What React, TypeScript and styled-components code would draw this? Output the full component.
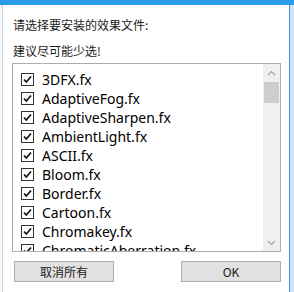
import React from "react";
import styled, { createGlobalStyle } from "styled-components";

const Global = createGlobalStyle`
  html, body { margin: 0; padding: 0; }
  body {
    width: 294px; height: 292px; overflow: hidden;
    background: #f4f7fa;
    font-family: "Noto Sans", "Noto Sans CJK SC", sans-serif;
  }
`;

const Page = styled.div`
  display: flex;
  flex-direction: column;
  width: 294px;
  height: 292px;
`;

const TitleStrip = styled.div`
  height: 5px;
  background: #2a9be8;
  flex: none;
`;

const Frame = styled.div`
  display: flex;
  flex: 1;
`;

const Gutter = styled.div<{ $w: number; $bg: string }>`
  width: ${(p) => p.$w}px;
  flex: none;
  background: ${(p) => p.$bg};
`;

const Window = styled.div`
  flex: 1;
  display: flex;
  flex-direction: column;
  background: #fff;
  border-left: 1px solid #c9d6e3;
  border-right: 1px solid #3d95de;
`;

const Body = styled.div`
  display: flex;
  flex-direction: column;
  padding: 12px 8px 0 9px;
`;

const Label = styled.div<{ $mt: number }>`
  font-family: "Noto Sans CJK SC", sans-serif;
  font-size: 12px;
  line-height: 16px;
  color: #1a1a1a;
  margin-top: ${(p) => p.$mt}px;
  padding-left: 1px;
`;

const ListBox = styled.div`
  margin-top: 4px;
  height: 187px;
  border: 1px solid #adadad;
  display: flex;
  overflow: hidden;
`;

const Items = styled.div`
  flex: 1;
  padding: 6px 0 0 8px;
  overflow: hidden;
`;

const Row = styled.div`
  height: 19px;
  display: flex;
  align-items: center;
  gap: 8px;
  font-family: "Noto Sans", sans-serif;
  font-size: 14px;
  color: #000;
  white-space: nowrap;
`;

const Box = styled.span`
  width: 11px;
  height: 11px;
  border: 1px solid #333;
  background: #fff;
  flex: none;
  display: flex;
  align-items: center;
  justify-content: center;
`;

const ScrollBar = styled.div`
  width: 17px;
  flex: none;
  background: #f0f0f0;
  display: flex;
  flex-direction: column;
`;

const Arrow = styled.div`
  height: 17px;
  display: flex;
  align-items: center;
  justify-content: center;
  flex: none;
`;

const Thumb = styled.div`
  height: 21px;
  margin: 1px 1px 0;
  background: #cdcdcd;
  flex: none;
`;

const Track = styled.div`
  flex: 1;
`;

const Buttons = styled.div`
  display: flex;
  justify-content: space-between;
  margin-top: 9px;
  padding-left: 2px;
`;

const Button = styled.button`
  width: 100px;
  height: 21px;
  background: #e1e1e1;
  border: 1px solid #adadad;
  padding: 0;
  font-family: "Noto Sans CJK SC", "Noto Sans", sans-serif;
  font-size: 12px;
  color: #1a1a1a;
  display: flex;
  align-items: center;
  justify-content: center;
`;

const Check = () => (
  <svg width="9" height="9" viewBox="0 0 9 9">
    <polyline points="1,4.5 3.3,7 8,1.5" fill="none" stroke="#111" strokeWidth="1.7" />
  </svg>
);

const Chevron = ({ up }: { up: boolean }) => (
  <svg width="9" height="6" viewBox="0 0 9 6">
    <polyline
      points={up ? "1,5 4.5,1.5 8,5" : "1,1 4.5,4.5 8,1"}
      fill="none"
      stroke="#a3a3a3"
      strokeWidth="1.2"
    />
  </svg>
);

const files = [
  "3DFX.fx",
  "AdaptiveFog.fx",
  "AdaptiveSharpen.fx",
  "AmbientLight.fx",
  "ASCII.fx",
  "Bloom.fx",
  "Border.fx",
  "Cartoon.fx",
  "Chromakey.fx",
  "ChromaticAberration.fx",
];

export default function App() {
  return (
    <>
      <Global />
      <Page>
        <TitleStrip />
        <Frame>
          <Gutter $w={2} $bg="#f4f7fa" />
          <Window>
            <Body>
              <Label $mt={0}>请选择要安装的效果文件:</Label>
              <Label $mt={10}>建议尽可能少选!</Label>
              <ListBox>
                <Items>
                  {files.map((f) => (
                    <Row key={f}>
                      <Box>
                        <Check />
                      </Box>
                      {f}
                    </Row>
                  ))}
                </Items>
                <ScrollBar>
                  <Arrow>
                    <Chevron up />
                  </Arrow>
                  <Thumb />
                  <Track />
                  <Arrow>
                    <Chevron up={false} />
                  </Arrow>
                </ScrollBar>
              </ListBox>
              <Buttons>
                <Button>取消所有</Button>
                <Button>OK</Button>
              </Buttons>
            </Body>
          </Window>
          <Gutter $w={4} $bg="#d3e3f2" />
        </Frame>
      </Page>
    </>
  );
}
